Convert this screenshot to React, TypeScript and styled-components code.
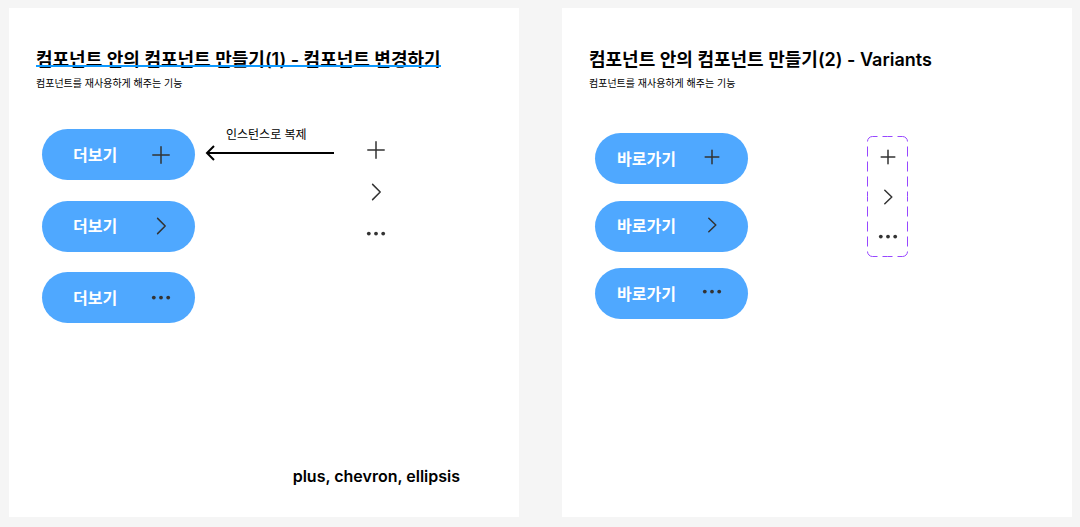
import React from "react";
import styled, { createGlobalStyle } from "styled-components";

const GlobalStyle = createGlobalStyle`
  *, *::before, *::after { box-sizing: border-box; }
  body {
    margin: 0;
    background: #f5f5f5;
    color: #000;
    font-family: Inter, "Noto Sans CJK KR", sans-serif;
  }
  h2, p { margin: 0; }
`;

const Page = styled.main`
  display: grid;
  grid-template-columns: 1fr 1fr;
  gap: 43px;
  min-height: 100vh;
  padding: 8px 8px 10px 9px;
`;

const Board = styled.section`
  display: flex;
  flex-direction: column;
  padding: 40px 27px 29px;
  background: #fff;
`;

const Title = styled.h2<{ $underlined?: boolean }>`
  position: relative;
  align-self: flex-start;
  font-size: 18px;
  line-height: 24px;
  font-weight: 600;
  white-space: nowrap;

  &::after {
    content: "";
    display: ${(p) => (p.$underlined ? "block" : "none")};
    position: absolute;
    left: 0;
    right: 0;
    bottom: 5px;
    height: 2px;
    background: #0d99ff;
  }
`;

const Subtitle = styled.p`
  margin-top: 3px;
  font-size: 10px;
  line-height: 16px;
`;

const Content = styled.div`
  display: flex;
  align-items: flex-start;
  margin-top: 36px;
  padding-left: 6px;
`;

const ButtonColumn = styled.div<{ $top: number; $minHeight: number }>`
  display: flex;
  flex-direction: column;
  justify-content: space-between;
  min-height: ${(p) => p.$minHeight}px;
  margin-top: ${(p) => p.$top}px;
`;

const PillButton = styled.button<{ $wide?: boolean }>`
  display: flex;
  align-items: center;
  justify-content: space-between;
  width: 153px;
  height: 51px;
  padding: ${(p) => (p.$wide ? "0 24px 0 22px" : "0 22px 0 31px")};
  border: 0;
  border-radius: 26px;
  background: #4fa8ff;
  color: #fff;
  font: inherit;
  font-size: 16px;
  line-height: 24px;
  font-weight: 600;
  cursor: pointer;

  svg {
    margin-bottom: ${(p) => (p.$wide ? 3 : 0)}px;
  }
`;

const Glyph = styled.svg`
  display: block;
  flex: none;
  width: 24px;
  height: 24px;
  fill: none;
  stroke: #333;
  stroke-width: 1.5;
  stroke-linecap: round;
  stroke-linejoin: round;
`;

const Annotation = styled.div`
  display: flex;
  flex-direction: column;
  width: 130px;
  margin-left: 10px;
`;

const AnnotationText = styled.p`
  padding-left: 21px;
  font-size: 12px;
  line-height: 16px;
`;

const Arrow = styled.svg`
  display: block;
  width: 130px;
  height: 16px;
  margin-top: 2px;
  fill: none;
  stroke: #000;
  stroke-width: 2;
`;

const IconColumn = styled.div`
  display: flex;
  flex-direction: column;
  gap: 18px;
  margin: 11px 0 0 29px;
`;

const VariantFrame = styled.div`
  position: relative;
  display: flex;
  flex-direction: column;
  align-items: center;
  gap: 16px;
  width: 41px;
  margin: 9px 0 0 119px;
  padding: 9px 0 8px;
`;

const DashedOutline = styled.svg`
  position: absolute;
  inset: 0;
  width: 100%;
  height: 100%;
  fill: none;
  stroke: #9747ff;
  stroke-dasharray: 10 5;
  stroke-dashoffset: 5;
`;

const Note = styled.p`
  align-self: flex-end;
  margin-top: auto;
  padding-right: 32px;
  font-size: 16px;
  line-height: 24px;
  font-weight: 600;
`;

type IconName = "plus" | "chevron" | "ellipsis";

const ICONS: IconName[] = ["plus", "chevron", "ellipsis"];

// Each quarter of the outline runs from the middle of its sides to the corner,
// so the dashes stay symmetric on all four sides.
const QUARTERS = ["", "translate(41 0) scale(-1 1)", "translate(0 121) scale(1 -1)", "translate(41 121) scale(-1 -1)"];

function Icon({ name, small }: { name: IconName; small?: boolean }) {
  return (
    <Glyph viewBox="0 0 24 24" aria-hidden="true">
      {name === "plus" &&
        (small ? (
          <path d="M12 5.2v13.6M5.2 12h13.6" />
        ) : (
          <path d="M12 3.8v16.4M3.8 12h16.4" />
        ))}
      {name === "chevron" &&
        (small ? (
          <path d="M8.8 5.2l7 6.8-7 6.8" />
        ) : (
          <path d="M8.6 4.4l7.6 7.6-7.6 7.6" />
        ))}
      {name === "ellipsis" && (
        <g fill="#333" stroke="none">
          <circle cx="4.8" cy="11.6" r="1.9" />
          <circle cx="12" cy="11.6" r="1.9" />
          <circle cx="19.2" cy="11.6" r="1.9" />
        </g>
      )}
    </Glyph>
  );
}

export default function App() {
  return (
    <>
      <GlobalStyle />
      <Page>
        <Board>
          <Title $underlined>컴포넌트 안의 컴포넌트 만들기(1) - 컴포넌트 변경하기</Title>
          <Subtitle>컴포넌트를 재사용하게 해주는 기능</Subtitle>
          <Content>
            <ButtonColumn $top={2} $minHeight={194}>
              {ICONS.map((name) => (
                <PillButton key={name} type="button">
                  더보기
                  <Icon name={name} />
                </PillButton>
              ))}
            </ButtonColumn>
            <Annotation>
              <AnnotationText>인스턴스로 복제</AnnotationText>
              <Arrow viewBox="0 0 130 16" aria-hidden="true">
                <path d="M129 8H2M9 1L2 8l7 7" />
              </Arrow>
            </Annotation>
            <IconColumn>
              {ICONS.map((name) => (
                <Icon key={name} name={name} />
              ))}
            </IconColumn>
          </Content>
          <Note>plus, chevron, ellipsis</Note>
        </Board>
        <Board>
          <Title>컴포넌트 안의 컴포넌트 만들기(2) - Variants</Title>
          <Subtitle>컴포넌트를 재사용하게 해주는 기능</Subtitle>
          <Content>
            <ButtonColumn $top={6} $minHeight={186}>
              {ICONS.map((name) => (
                <PillButton key={name} type="button" $wide>
                  바로가기
                  <Icon name={name} small />
                </PillButton>
              ))}
            </ButtonColumn>
            <VariantFrame>
              <DashedOutline viewBox="0 0 41 121" aria-hidden="true">
                {QUARTERS.map((transform) => (
                  <g key={transform} transform={transform}>
                    <path d="M20.5 .5H5.5A5 5 0 0 0 1.96 1.96" />
                    <path d="M.5 60.5V5.5A5 5 0 0 1 1.96 1.96" />
                  </g>
                ))}
              </DashedOutline>
              {ICONS.map((name) => (
                <Icon key={name} name={name} small />
              ))}
            </VariantFrame>
          </Content>
        </Board>
      </Page>
    </>
  );
}
